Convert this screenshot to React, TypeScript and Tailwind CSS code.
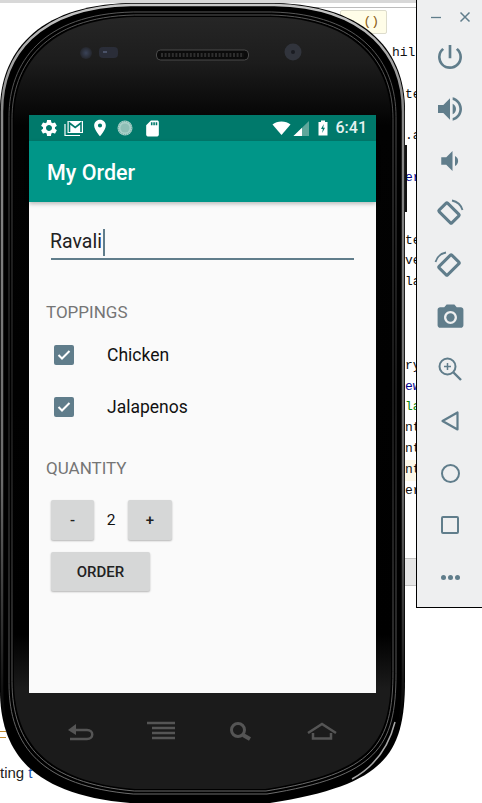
import React from "react";
import { MdPowerSettingsNew, MdVolumeUp, MdVolumeDown, MdPhotoCamera, MdSettings, MdLocationOn, MdSdCard } from "react-icons/md";

const BODY =
  "M0,110 C0,55 35,5 130,3 L275,3 C370,5 405,55 405,110 L405,680 C405,755 385,785 270,803 L130,803 C35,795 0,755 0,690 Z";

function Inset({ i, ...rest }: { i: number } & React.SVGProps<SVGPathElement>) {
  const sx = (405 - 2 * i) / 405;
  const sy = (800 - 2 * i) / 800;
  return <path d={BODY} transform={`translate(202.5 403) scale(${sx} ${sy}) translate(-202.5 -403)`} {...rest} />;
}

function PhoneShell() {
  return (
    <svg width="410" height="803" viewBox="0 0 410 803" className="absolute left-0 top-0">
      <defs>
        <linearGradient id="rim" x1="0" y1="0" x2="0" y2="1">
          <stop offset="0" stopColor="#c8c8c8" />
          <stop offset="0.12" stopColor="#8a8a8a" />
          <stop offset="0.6" stopColor="#6a6a6a" />
          <stop offset="0.8" stopColor="#2a2a2a" />
          <stop offset="0.9" stopColor="#000000" />
          <stop offset="1" stopColor="#000000" />
        </linearGradient>
        <linearGradient id="line" x1="0" y1="0" x2="0" y2="1">
          <stop offset="0" stopColor="#5c5c5c" />
          <stop offset="0.5" stopColor="#333333" />
          <stop offset="1" stopColor="#707070" />
        </linearGradient>
        <linearGradient id="face" x1="0" y1="0" x2="0" y2="1">
          <stop offset="0" stopColor="#262626" />
          <stop offset="0.06" stopColor="#1c1c1c" />
          <stop offset="0.14" stopColor="#020202" />
          <stop offset="0.8" stopColor="#000000" />
          <stop offset="0.87" stopColor="#1b1b1b" />
          <stop offset="1" stopColor="#1b1b1b" />
        </linearGradient>
        <radialGradient id="sensor">
          <stop offset="0" stopColor="#3a4358" />
          <stop offset="1" stopColor="#24262c" />
        </radialGradient>
      </defs>
      <rect x="404" y="145" width="3" height="67" fill="#111111" />
      <path d={BODY} fill="#000000" />
      <Inset i={2} fill="none" stroke="url(#rim)" strokeWidth="2.5" />
      <Inset i={9} fill="none" stroke="url(#line)" strokeWidth="1" />
      <Inset i={12} fill="none" stroke="url(#line)" strokeWidth="1" />
      <Inset i={14} fill="url(#face)" />
      <path d="M352,779 C372,768 388,750 395,722" fill="none" stroke="#a8a8a8" strokeWidth="1.5" />
      <circle cx="86" cy="53" r="6" fill="url(#sensor)" />
      <rect x="99" y="47" width="19" height="11" rx="4" fill="#2a2d38" />
      <rect x="103" y="51" width="4" height="2" fill="#4a5268" />
      <circle cx="293" cy="52" r="8.5" fill="#31343c" />
      <circle cx="293" cy="52" r="2" fill="#1a1c22" />
      <rect x="156.5" y="50" width="92" height="10" rx="4" fill="#0b0b0b" stroke="#4a4a4a" strokeWidth="1" />
      <line x1="161" y1="55" x2="244" y2="55" stroke="#2e2e2e" strokeWidth="4" strokeDasharray="2 1.6" />
      <g fill="none" stroke="#555555" strokeWidth="2.5">
        <path d="M72,730 H87 C94,730 94,739 87,739 H70" />
        <path d="M147,723 H175 M152,728 H175 M152,733 H175 M152,738 H175" strokeWidth="2.4" />
        <circle cx="238" cy="730" r="6.5" strokeWidth="3" />
        <path d="M243,735 L250,739" strokeWidth="4" />
        <path d="M308,733 L322,724 L336,733 M313,733 V738.5 H331 V733" />
      </g>
      <path d="M68,730 L76,724 V735 Z" fill="#555555" />
    </svg>
  );
}

const code: [string, string][] = [
  ["hil", "#111111"], ["", ""], ["te", "#111111"], ["", ""], [".a", "#111111"], ["", ""], ["er", "#00008b"], ["", ""], ["", ""],
  ["te", "#111111"], ["ve", "#111111"], ["la", "#111111"], ["", ""], ["", ""], ["", ""],
  ["ry", "#111111"], ["ew", "#00008b"], ["la", "#0a8a0a"], ["nt", "#111111"], ["nt", "#111111"], ["nt", "#111111"], ["er", "#111111"],
];

function Background() {
  return (
    <div className="absolute inset-0 bg-white">
      <div className="h-[3px] bg-[#d8d8d8]" />
      <div className="mt-[4px] ml-[300px] h-px bg-[#bcbcbc]" />
      <div className="ml-[340px] mt-[2px] flex h-[24px] w-[47px] items-center justify-end rounded-[2px] border border-[#dddccc] bg-[#fffde8] pr-[7px] font-['Liberation_Mono'] text-[13px] text-[#8a5a10]">
        ()
      </div>
      <div className="ml-[405px] mt-[9px] font-['Liberation_Mono'] text-[13px]">
        {code.map(([t, c], i) => (
          <div
            key={i}
            style={{ color: c }}
            className={
              i === 0
                ? "-ml-[13px] h-[20.85px] whitespace-pre leading-[20.85px]"
                : i === 20
                  ? "h-[20.85px] whitespace-pre bg-[#fdf8e8] leading-[20.85px]"
                  : "h-[20.85px] whitespace-pre leading-[20.85px]"
            }
          >
            {t}
          </div>
        ))}
      </div>
      <div className="ml-[400px] mt-[56px] h-[28px] border-y border-[#c4c4c4] bg-[#e6e6e6]" />
      <div className="ml-0 mt-[145px] w-[6px] border-y border-[#c08a30] pb-[5px]" />
      <div className="mt-[26px] font-['Liberation_Sans'] text-[15px] leading-[18px] text-[#222222]">
        ting <span className="text-[#1a56b0]">t</span>
      </div>
    </div>
  );
}

function Rotate({ flip }: { flip?: boolean }) {
  return (
    <svg width="30" height="30" viewBox="0 0 30 30" fill="none" stroke="#607d8b" className={flip ? "-ml-[2px] -scale-x-100" : "-ml-[2px]"}>
      <rect x="6" y="9" width="18" height="12" rx="1" transform="rotate(45 15 15)" strokeWidth="3" />
      <path d="M18,2.5 C23,3.5 27,7 28.5,12" strokeWidth="1.8" />
    </svg>
  );
}

function ToolSlot({ children }: { children: React.ReactNode }) {
  return <div className="flex h-[52px] items-center justify-center">{children}</div>;
}

function Toolbar() {
  return (
    <div className="absolute left-[416px] top-0 h-[608px] w-[66px] border-b border-l border-black bg-[#eeeff0] pl-px">
      <div className="flex h-[31px] items-center justify-between pl-[12px] pr-[11px] pt-[3px]">
        <svg width="12" height="12" viewBox="0 0 12 12"><path d="M1,6.5 H11" stroke="#607d8b" strokeWidth="1.3" /></svg>
        <svg width="12" height="12" viewBox="0 0 12 12"><path d="M1.5,1.5 L10.5,10.5 M10.5,1.5 L1.5,10.5" stroke="#607d8b" strokeWidth="1.5" /></svg>
      </div>
      <div className="flex flex-col text-[#607d8b]">
        <ToolSlot><MdPowerSettingsNew size={32} /></ToolSlot>
        <ToolSlot><MdVolumeUp size={32} /></ToolSlot>
        <ToolSlot><MdVolumeDown size={30} /></ToolSlot>
        <ToolSlot><Rotate /></ToolSlot>
        <ToolSlot><Rotate flip /></ToolSlot>
        <ToolSlot><MdPhotoCamera size={31} /></ToolSlot>
        <ToolSlot>
          <svg width="26" height="26" viewBox="0 0 26 26" fill="none" stroke="#607d8b">
            <circle cx="10.5" cy="10.5" r="8" strokeWidth="2" />
            <path d="M16.5,16.5 L24,24" strokeWidth="2.4" />
            <path d="M7,10.5 H14 M10.5,7 V14" strokeWidth="1.5" />
          </svg>
        </ToolSlot>
        <ToolSlot>
          <svg width="20" height="22" viewBox="0 0 20 22" fill="none" stroke="#607d8b" strokeWidth="2.2">
            <path d="M17.5,2.5 V19.5 L2.5,11 Z" strokeLinejoin="round" />
          </svg>
        </ToolSlot>
        <ToolSlot>
          <div className="h-[19px] w-[19px] rounded-full border-[2.5px] border-[#607d8b]" />
        </ToolSlot>
        <ToolSlot>
          <div className="h-[18px] w-[18px] rounded-[2px] border-[2.5px] border-[#607d8b]" />
        </ToolSlot>
        <ToolSlot>
          <div className="flex gap-[2px]">
            <div className="h-[5px] w-[5px] rounded-full bg-[#607d8b]" />
            <div className="h-[5px] w-[5px] rounded-full bg-[#607d8b]" />
            <div className="h-[5px] w-[5px] rounded-full bg-[#607d8b]" />
          </div>
        </ToolSlot>
      </div>
    </div>
  );
}

function StatusBar() {
  return (
    <div className="flex h-[26px] items-center bg-[#00796b] text-white">
      <MdSettings size={20} className="ml-[10px] shrink-0" />
      <svg width="20" height="17" viewBox="0 0 20 17" className="ml-[5px] shrink-0">
        <path d="M1,4 V15.5 H16" fill="none" stroke="#ffffff" strokeWidth="1.2" />
        <path d="M3.5,1 H19 V13 H3.5 Z" fill="#ffffff" />
        <path d="M5.5,12 V3 L11.2,7.5 L17,3 V12" fill="none" stroke="#00796b" strokeWidth="1.6" />
      </svg>
      <MdLocationOn size={20} className="ml-[6px] shrink-0" />
      <svg width="16" height="16" viewBox="0 0 16 16" className="ml-[7px] shrink-0">
        <circle cx="8" cy="8" r="7.5" fill="#a9cfc8" />
        <circle cx="8" cy="8" r="6.5" fill="none" stroke="#5fa79b" strokeWidth="1" strokeDasharray="1 1" />
        <circle cx="8" cy="8" r="4.5" fill="#8fbfb6" />
      </svg>
      <MdSdCard size={19} className="ml-[10px] shrink-0" />
      <svg width="19" height="14" viewBox="0 0 19 14" className="ml-auto shrink-0">
        <path d="M0.5,3.5 C5,-0.6 14,-0.6 18.5,3.5 L9.5,14 Z" fill="#ffffff" />
      </svg>
      <svg width="16" height="15" viewBox="0 0 16 15" className="ml-[2px] shrink-0">
        <path d="M0.5,15 L16,0 V15 Z" fill="#5fa79b" />
        <path d="M0.5,15 L9,6.8 V15 Z" fill="#ffffff" />
      </svg>
      <svg width="10" height="16" viewBox="0 0 10 16" className="ml-[9px] shrink-0">
        <path d="M3,0.5 H7 V2 H9.5 V15.5 H0.5 V2 H3 Z" fill="#ffffff" />
        <path d="M5.8,4 L3,9 H4.8 L4.2,13 L7,7.8 H5.2 Z" fill="#00796b" />
      </svg>
      <span className="ml-[8px] mr-[9px] font-['Roboto'] text-[16px] font-medium leading-none text-[#e6f2f0]">6:41</span>
    </div>
  );
}

function CheckRow({ label }: { label: string }) {
  return (
    <div className="flex h-[52px] items-center pl-[25px]">
      <div className="flex h-[20px] w-[20px] items-center justify-center rounded-[2px] bg-[#607d8b]">
        <svg width="14" height="12" viewBox="0 0 14 12" fill="none" stroke="#ffffff" strokeWidth="2">
          <path d="M1.5,6 L5,9.5 L12.5,2" />
        </svg>
      </div>
      <span className="ml-[33px] text-[17.5px] text-[#111111]">{label}</span>
    </div>
  );
}

function Btn({ w, children }: { w: string; children: React.ReactNode }) {
  return (
    <div className={`flex items-center justify-center rounded-[2px] bg-[#d6d7d7] pt-[1px] text-[15px] font-medium text-[#222222] shadow-[0_1px_2px_rgba(0,0,0,0.28)] ${w}`}>
      {children}
    </div>
  );
}

function Screen() {
  return (
    <div className="absolute left-[29px] top-[115px] flex h-[578px] w-[347px] flex-col bg-[#fafafa] font-['Roboto']">
      <StatusBar />
      <div className="flex h-[61px] items-center bg-[#009688] pl-[18px] pt-[3px] text-[21.5px] font-medium text-white shadow-[0_2px_4px_rgba(0,0,0,0.25)]">
        My Order
      </div>
      <div className="ml-[22px] mt-[26px] flex h-[32px] w-[303px] items-center border-b-2 border-[#607d8b] pb-[2px] text-[19.5px] text-[#222222]">
        <span className="-ml-px">Ravali</span>
        <div className="ml-px h-[27px] w-[2px] bg-[#607d8b]" />
      </div>
      <div className="ml-[17px] mt-[40px] h-[24px] text-[17px] leading-[24px] text-[#757575]">TOPPINGS</div>
      <div className="mt-[5px]">
        <CheckRow label="Chicken" />
        <CheckRow label="Jalapenos" />
      </div>
      <div className="ml-[17px] mt-[23px] h-[24px] text-[17px] leading-[24px] text-[#757575]">QUANTITY</div>
      <div className="ml-[22px] mt-[20px] flex h-[40px] items-stretch">
        <Btn w="w-[43px]">-</Btn>
        <div className="flex w-[34px] items-center justify-center pt-[1px] text-[15.5px] text-[#111111]">2</div>
        <Btn w="w-[44px]">+</Btn>
      </div>
      <div className="ml-[22px] mt-[12px] flex h-[39px]">
        <Btn w="w-[99px]">ORDER</Btn>
      </div>
    </div>
  );
}

export default function App() {
  return (
    <div className="relative h-[803px] w-[482px] overflow-hidden">
      <Background />
      <PhoneShell />
      <Screen />
      <Toolbar />
    </div>
  );
}
